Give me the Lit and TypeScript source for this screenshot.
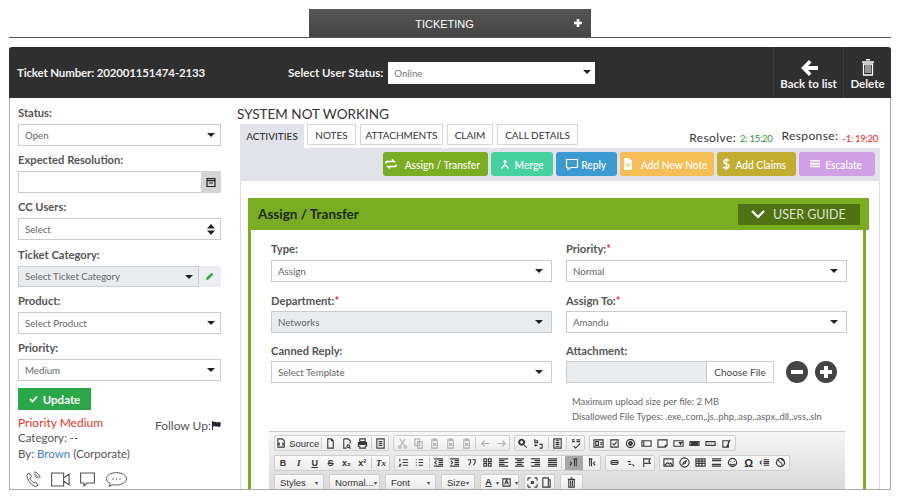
import { LitElement, html, css, svg } from 'lit';
import { customElement } from 'lit/decorators.js';

// 12x12 outline glyphs for the rich text toolbar
const GLYPHS: Record<string, string> = {
  source: 'M2 1h5l2 2v7H2zM4 5L3 6.5 4 8M7 5l1 1.5L7 8',
  doc: 'M3 1h4l2 2v8H3zM7 1v2h2',
  preview: 'M3 1h5l2 2v3M3 1v10h3M8 7.5a1.5 1.5 0 1 0 .01 0M9 10l1.5 1.5',
  print: 'M3 1h6v3H3zM1.5 5h9v4H9v2H3V9H1.5zM2 6h8M2 7h8',
  template: 'M2 1h8v10H2zM4 4h4M4 6h4M4 8h4',
  cut: 'M3 1l5 7M9 1L4 8M3 8.5a1.3 1.3 0 1 0 .01 0M9 8.5a1.3 1.3 0 1 0 .01 0',
  copy: 'M2 1h5v7H2zM5 4h5v7H5z',
  paste: 'M3 2h6v9H3zM5 1h2v2H5zM5 6h2v2H5z',
  undo: 'M5 3L2 6l3 3M2 6h8',
  redo: 'M7 3l3 3-3 3M10 6H2',
  search: 'M5 1.5a3.2 3.2 0 1 0 .01 0M7.5 7.5l3 3M5 2.5a2.2 2.2 0 1 0 .01 0',
  replace: 'M2 1v4h3V3H2M7 7h3v4H7M5 8H2M3 7L2 8l1 1',
  selectall: 'M2 1h8v10H2zM4 3h4M4 5h4M4 7h4M4 9h4',
  spell: 'M1 2h3M1 4h3M6 2h4M6 4h4M3 9l2 2 5-5',
  form: 'M1 2h10v8H1zM3 4h3v4H3zM8 5h2M8 7h2',
  checkbox: 'M2 2h8v8H2zM4 6l1.5 1.5L8.5 4',
  radio: 'M6 1.5a4.5 4.5 0 1 0 .01 0M6 4a2 2 0 1 0 .01 0M6 5a1 1 0 1 0 .01 0',
  field: 'M1 3h10v6H1zM3 3v6',
  area: 'M1 2h10v6l-2 2H1zM9 10V8h2',
  selectbox: 'M1 3h10v6H1zM7 5h2.5L8.2 7z',
  button: 'M1 4h10v4H1zM2 5h8M2 6h8M2 7h8',
  hidden: 'M1 4h10v4H1zM4 6h.5M7 6h.5',
  hiddenfield: 'M2 3h6v7H2zM6 10l4-8',
  ol: 'M2 2v3M1.5 8h1.5L1.5 10H3M5 3h6M5 6h6M5 9h6',
  ul: 'M2 3h1M2 6h1M2 9h1M5 3h5M5 6h5M5 9h5',
  outdent: 'M1 2h10M1 10h10M6 4h5M6 6h5M6 8h5M4 4L2 6l2 2',
  indent: 'M1 2h10M1 10h10M6 4h5M6 6h5M6 8h5M2 4l2 2-2 2',
  quote: 'M2 3h3v3L3 9M7 3h3v3L8 9',
  div: 'M2 2h3v3H2zM7 2h3v3H7zM2 7h3v3H2zM7 7h3v3H7z',
  left: 'M1 2h10M1 4h6M1 6h10M1 8h6M1 10h10',
  center: 'M1 2h10M3 4h6M1 6h10M3 8h6M1 10h10',
  right: 'M1 2h10M5 4h6M1 6h10M5 8h6M1 10h10',
  justify: 'M1 2h10M1 4h10M1 6h10M1 8h10M1 10h10',
  ltr: 'M6 2h4M7 2v8M9 2v8M2 5l2 2-2 2',
  rtl: 'M3 2h4M4 2v8M6 2v8M10 5L8 7l2 2',
  link: 'M4 4h4a2 2 0 0 1 0 4H4a2 2 0 0 1 0-4zM3 6h6',
  unlink: 'M3 5h3M8 8l2 2M4 8h3',
  flag: 'M3 1v10M3 2h7L8.5 4.5 10 7H3',
  image: 'M1 2h10v8H1zM2 9l3-3 2 2 1.5-1.5L10 9',
  flash: 'M6 1a5 5 0 1 0 .01 0M8 4L5 6l-1 2 3-1z',
  table: 'M1 2h10v8H1zM1 4.5h10M1 7h10M4.3 2v8M7.6 2v8',
  rule: 'M1 2h10M1 4h10M1 8h10M1 10h10',
  smile: 'M6 1.5a4.5 4.5 0 1 0 .01 0M4 4.5v1M8 4.5v1M3.5 7.5c1 1.5 4 1.5 5 0',
  pagebreak: 'M1 6l2-2M1 6l2 2M5 3h6M5 5h6M5 7h6M5 9h6',
  iframe: 'M6 1.5a4.5 4.5 0 1 0 .01 0M3 3c2 1 1 3 3 3s1 3 2 3M7 2c0 2 2 1 3 3',
  fit: 'M1 1h3M1 1v3M11 1H8M11 1v3M1 11h3M1 11V8M11 11H8M11 11V8M5 5h2v2H5z',
  blocks: 'M2 1h6v10H2zM8 3h2v8H8',
  trash: 'M3 3h6v8H3zM2 2.5h8M5 1h2M5 4v6M7 4v6',
  bg: 'M2 2h8v8H2zM4 8l2-5 2 5M5 6.5h2',
};

type Item = { i?: string; t?: string; cls?: string } | '|';
type Group = { w: number; dim?: boolean; items: Item[] };

const g = (names: string) =>
  names.split(' ').map((n): Item => (n === '|' ? '|' : { i: n }));

const ROW1: Group[] = [
  { w: 115, items: [{ i: 'source', t: 'Source', cls: 'wide' }, '|', ...g('doc preview print | template')] },
  { w: 117, dim: true, items: g('cut copy paste paste paste | undo redo') },
  { w: 71, items: g('search replace | selectall | spell') },
  { w: 147, items: g('form checkbox radio field area selectbox button hidden hiddenfield') },
];

const ROW2: Group[] = [
  {
    w: 116,
    items: [
      { t: 'B', cls: 'b' }, { t: 'I', cls: 'it' }, { t: 'U', cls: 'u' }, { t: 'S', cls: 's' },
      { t: 'x₂', cls: 'b' }, { t: 'x²', cls: 'b' }, '|', { t: 'Tx', cls: 'it' },
    ],
  },
  {
    w: 207,
    items: [
      ...g('ol ul | outdent indent quote div left center right justify |'),
      { i: 'ltr', cls: 'on' },
      { i: 'rtl' },
    ],
  },
  { w: 50, items: g('link unlink flag') },
  {
    w: 131,
    items: [...g('image flash table rule smile'), { t: 'Ω', cls: 'omega' }, ...g('pagebreak iframe')],
  },
];

const COMBOS = [
  { t: 'Styles', w: 50 },
  { t: 'Normal...', w: 51 },
  { t: 'Font', w: 51 },
  { t: 'Size', w: 34 },
];

const icon = (name: string) => html`<svg class="ck-ic" viewBox="0 0 12 12">${svg`<path d=${GLYPHS[name]}></path>`}</svg>`;

@customElement('cke-toolbar')
export class CkeToolbar extends LitElement {
  static styles = css`
    :host {
      display: block;
      width: 576px;
      height: 80px;
      padding: 3px 0 0 5px;
      box-sizing: border-box;
      background: linear-gradient(#f6f6f6, #cfcfcf);
      border-top: 1px solid #c9c9c9;
    }
    .row { display: flex; gap: 4px; height: 16px; margin-bottom: 3.5px; }
    .group {
      display: flex;
      align-items: center;
      justify-content: space-around;
      box-sizing: border-box;
      height: 16px;
      border: 1px solid #cfcfcf;
      border-radius: 2px;
      background: linear-gradient(#fbfbfb, #ececec);
      font: 9.5px "Liberation Sans", sans-serif;
      color: #333;
    }
    .group.combo { padding: 0 5px; justify-content: space-between; }
    .group.color { width: 39px; }
    .group.view { width: 31px; }
    .group.tools { width: 23px; }
    .dim .ck-ic { opacity: .35; }
    .btn {
      display: flex;
      align-items: center;
      justify-content: center;
      width: 14px;
      height: 14px;
      font-size: 9px;
      gap: 2px;
    }
    .btn.wide { width: 44px; font-size: 9.5px; }
    .btn.on { background: #a8a8a8; width: 18px; }
    .btn.b { font-weight: bold; }
    .btn.it { font-style: italic; font-weight: bold; font-family: "Liberation Serif", serif; }
    .btn.u { font-weight: bold; text-decoration: underline; }
    .btn.s { font-weight: bold; text-decoration: line-through; }
    .btn.omega { font-size: 11px; font-weight: bold; }
    .sep { width: 1px; height: 12px; background: #ccc; }
    .ck-ic { width: 11px; height: 11px; flex: none; }
    .ck-ic path { fill: none; stroke: #3a3a3a; stroke-width: 1.2; }
    .arrow { font-size: 6px; color: #444; }
    .row3 { gap: 5px; }
  `;

  private renderGroup(group: Group) {
    return html`<div class="group ${group.dim ? 'dim' : ''}" style="width:${group.w}px">
      ${group.items.map((it) =>
        it === '|'
          ? html`<span class="sep"></span>`
          : html`<span class="btn ${it.cls ?? ''}">${it.i ? icon(it.i) : ''}${it.t ?? ''}</span>`
      )}
    </div>`;
  }

  render() {
    return html`
      <div class="row">${ROW1.map((r) => this.renderGroup(r))}</div>
      <div class="row">${ROW2.map((r) => this.renderGroup(r))}</div>
      <div class="row row3">
        ${COMBOS.map(
          (c) => html`<div class="group combo" style="width:${c.w}px"><span>${c.t}</span><span class="arrow">▾</span></div>`
        )}
        <div class="group color">
          <span class="btn u">A</span><span class="arrow">▾</span><span class="btn">${icon('bg')}</span><span class="arrow">▾</span>
        </div>
        <div class="group view">
          <span class="btn">${icon('fit')}</span><span class="btn">${icon('blocks')}</span>
        </div>
        <div class="group tools"><span class="btn">${icon('trash')}</span></div>
      </div>
    `;
  }
}

const TABS = [
  { label: 'ACTIVITIES', w: 64, active: true },
  { label: 'NOTES', w: 49 },
  { label: 'ATTACHMENTS', w: 83 },
  { label: 'CLAIM', w: 46 },
  { label: 'CALL DETAILS', w: 81 },
];

const ACTIONS = [
  {
    label: 'Assign / Transfer',
    cls: 'assign',
    icon: svg`<path d="M2 4.500h8l-2-2M12 9.500H4l2 2M2 4.500v2M12 9.500v-2" fill="none" stroke="#fff" stroke-width="1.600"/>`,
  },
  {
    label: 'Merge',
    cls: 'merge',
    icon: svg`<path d="M7 3.500v4M3.500 11.500L7 7.500l3.500 4M5.500 5L7 3.500 8.500 5" fill="none" stroke="#fff" stroke-width="1.300"/>`,
  },
  {
    label: 'Reply',
    cls: 'reply',
    icon: svg`<path d="M1.500 2.500h11v8H6l-3 2v-2H1.500z" fill="none" stroke="#fff" stroke-width="1.200"/>`,
  },
  {
    label: 'Add New Note',
    cls: 'note',
    icon: svg`<path d="M3 1h5l3 3v9H3z" fill="#fff"/><path d="M5 7h4M5 9h4" stroke="#f5bf56"/>`,
  },
  { label: 'Add Claims', cls: 'claims', text: '$' },
  {
    label: 'Escalate',
    cls: 'escalate',
    icon: svg`<path d="M2 3h10v1.600H2zM2 5.800h10v1.600H2zM2 8.600h10v1.600H2z" fill="#fff"/>`,
  },
];

const caret = html`<span class="caret"></span>`;

@customElement('app-root')
export class AppRoot extends LitElement {
  static styles = css`
    :host {
      display: block;
      width: 900px;
      height: 500px;
      overflow: hidden;
      background: #fff;
      font-family: Lato, "Open Sans", sans-serif;
      color: #555;
    }
    .page {
      display: flex;
      flex-direction: column;
      box-sizing: border-box;
      height: 500px;
      padding: 9px 9px 10px;
    }
    .nav {
      display: flex;
      justify-content: center;
      height: 29px;
      flex: none;
      box-sizing: border-box;
      border-bottom: 1px solid #555;
    }
    .nav-tab {
      display: flex;
      align-items: center;
      justify-content: center;
      position: relative;
      box-sizing: border-box;
      width: 282px;
      padding: 2px 11px 0 0;
      background: linear-gradient(#555, #454545);
      color: #fff;
      font: 11px "Liberation Sans", sans-serif;
    }
    .nav-plus {
      position: absolute;
      right: 8px;
      top: 9px;
      width: 10px;
      height: 10px;
    }
    .head {
      display: flex;
      align-items: stretch;
      flex: none;
      height: 51px;
      margin-top: 9px;
      background: #2f2f2f;
      border-radius: 3px 3px 0 0;
      color: #f0f0f0;
      font-size: 11.5px;
      font-weight: 700;
    }
    .ticket-no {
      display: flex;
      align-items: center;
      width: 271px;
      padding-left: 8px;
      box-sizing: border-box;
      letter-spacing: -.15px;
    }
    .user-status { display: flex; align-items: center; gap: 5px; flex: 1; padding-left: 8px; }
    .user-status .sel {
      width: 207px;
      height: 22px;
      border: 0;
      color: #777;
    }
    .user-status .caret { right: 4px; }
    .head-btn {
      display: flex;
      flex-direction: column;
      align-items: center;
      justify-content: flex-end;
      padding-bottom: 7px;
      box-sizing: border-box;
      border-left: 1px solid #3d3d3d;
      font-size: 11.5px;
      line-height: 14px;
    }
    .head-btn svg { display: block; margin-bottom: 1px; }
    .back { width: 70px; }
    .del { width: 48px; }

    .main {
      display: flex;
      flex: 1;
      min-height: 0;
      overflow: hidden;
      border: 1px solid #aaa;
      border-top: 0;
    }
    .side {
      flex: none;
      width: 203px;
      margin-left: 8px;
      padding-top: 8px;
    }
    label {
      display: block;
      height: 14px;
      line-height: 14px;
      font-size: 11.2px;
      font-weight: 700;
      color: #555;
    }
    label i { font-style: normal; color: #e33; }
    .field { margin-bottom: 7.2px; }
    .side label { margin-bottom: 4px; }
    .sel {
      display: flex;
      align-items: center;
      position: relative;
      box-sizing: border-box;
      height: 22px;
      padding-left: 6px;
      border: 1px solid #ccc;
      background: #fff;
      font-size: 9.7px;
      font-weight: 400;
      color: #666;
    }
    .sel.off { background: #e9ecef; }
    .caret {
      position: absolute;
      right: 5px;
      top: 8px;
      width: 0;
      height: 0;
      border-left: 4px solid transparent;
      border-right: 4px solid transparent;
      border-top: 4px solid #222;
    }
    .updown {
      position: absolute;
      right: 5px;
      top: 5px;
      width: 8px;
      height: 11px;
    }
    .addon {
      position: absolute;
      right: -1px;
      top: -1px;
      bottom: -1px;
      width: 20px;
      display: flex;
      align-items: center;
      justify-content: center;
      background: #d4d4d4;
    }
    .cat { display: flex; }
    .cat .sel { flex: 1; height: 21px; }
    .cat .caret { right: 5px; }
    .cat-edit {
      display: flex;
      align-items: center;
      justify-content: center;
      width: 22px;
      background: #eceef1;
    }
    .update {
      display: flex;
      align-items: center;
      justify-content: center;
      gap: 5px;
      width: 73px;
      height: 22px;
      margin-bottom: 6px;
      background: #2aa748;
      color: #fff;
      font-size: 11.5px;
      font-weight: 700;
    }
    .meta { position: relative; font-size: 11.5px; line-height: 15px; }
    .prio { font-size: 12px; color: #e0391c; line-height: 14px; }
    .by { margin-top: 1px; }
    .by a { color: #3f7fbf; }
    .follow {
      position: absolute;
      right: 0;
      top: 2px;
      display: flex;
      align-items: center;
      gap: 1px;
      font-size: 12px;
    }
    .contact { display: flex; align-items: center; gap: 10px; margin: 10px 0 0 7px; }
    .contact svg:last-child { margin-left: 1px; }

    .content { flex: none; width: 643px; margin-left: 16px; }
    h1 {
      margin: 7px 0 0;
      height: 19px;
      line-height: 18px;
      font-size: 13.5px;
      font-weight: 400;
      color: #333;
    }
    .tabs {
      display: flex;
      gap: 4px;
      position: relative;
      height: 24px;
      margin-left: 3px;
    }
    .tab {
      display: flex;
      align-items: center;
      justify-content: center;
      box-sizing: border-box;
      height: 21px;
      border: 1px solid #d5d5d5;
      font-size: 10px;
      color: #333;
    }
    .tab.active { height: 24px; border: 0; background: #e1e3e8; font-weight: 500; margin-right: -1px; }
    .timers {
      position: absolute;
      right: 2px;
      top: 5px;
      display: flex;
      align-items: flex-start;
      gap: 9px;
      font-size: 12px;
      line-height: 14px;
      letter-spacing: .4px;
      color: #333;
    }
    .timers .resolve { margin-top: 2px; }
    .clock { font-size: 9.5px; letter-spacing: -.3px; margin-left: 4px; }
    .timers .ok { color: #2a9a3a; }
    .timers .late { color: #e22; vertical-align: -2px; }
    .panel { margin-left: 3px; width: 640px; border: 1px solid #ddd; border-width: 0 1px; box-sizing: border-box; }
    .actions {
      display: flex;
      justify-content: flex-end;
      gap: 3px;
      box-sizing: border-box;
      height: 33px;
      margin: 0 -1px;
      padding: 4px 5px 0 0;
      background: #e1e3e8;
    }
    .act {
      display: flex;
      align-items: center;
      justify-content: center;
      gap: 0;
      height: 24px;
      border-radius: 3px;
      color: #fff;
      font-size: 12px;
      font-weight: 500;
      white-space: nowrap;
    }
    .act b { font-weight: 700; font-size: 13px; margin-right: 1px; }
    .act span { display: inline-block; transform: scaleX(.85); }
    .assign { width: 105px; background: #7aad22; }
    .merge { width: 62px; background: #48d1a0; }
    .reply { width: 61px; background: #3d9ad1; }
    .note { width: 94px; background: #f5bf56; }
    .claims { width: 79px; background: #c2ad31; }
    .escalate { width: 76px; background: #d09fe6; }

    .card { margin: 17px 0 0 7px; width: 621px; }
    .card-head {
      display: flex;
      align-items: center;
      justify-content: space-between;
      height: 32px;
      padding: 0 9px 0 10px;
      box-sizing: border-box;
      background: #7aad22;
      color: #1d2a08;
      font-size: 13.5px;
      font-weight: 700;
    }
    .guide {
      display: flex;
      align-items: center;
      gap: 8px;
      box-sizing: border-box;
      width: 122px;
      height: 21px;
      padding-left: 13px;
      background: #4f7213;
      color: #dde5cc;
      font-size: 12.5px;
      font-weight: 400;
    }
    .card-body {
      width: 618px;
      box-sizing: border-box;
      padding: 12px 0 0 18px;
      border: 3px solid #7aad22;
      border-width: 0 3px;
    }
    .grid {
      display: grid;
      grid-template-columns: 281px 281px;
      column-gap: 14px;
      row-gap: 11.5px;
      margin-left: 2px;
    }
    .grid label { margin-bottom: 4px; }
    .grid > div:nth-child(n+3) label { margin-bottom: 3px; }
    .grid .caret { right: 8px; }
    .file { display: flex; align-items: center; }
    .file-name { width: 141px; height: 22px; background: #e9ecef; border: 1px solid #ccc; box-sizing: border-box; }
    .file-btn {
      display: flex;
      align-items: center;
      justify-content: center;
      box-sizing: border-box;
      width: 67px;
      height: 22px;
      border: 1px solid #ccc;
      border-left: 0;
      font-size: 10px;
      color: #444;
    }
    .circles { display: flex; gap: 7px; margin-left: 12px; }
    .circles svg { display: block; }
    .hints {
      margin: 11px 0 0 6px;
      font-size: 9.4px;
      line-height: 15px;
      color: #666;
      white-space: nowrap;
    }
    cke-toolbar { margin-top: 7px; }
  `;

  render() {
    return html`
      <div class="page">
        <div class="nav">
          <div class="nav-tab">
            TICKETING
            <svg class="nav-plus" viewBox="0 0 10 10"><path d="M5 1v8M1 5h8" stroke="#fff" stroke-width="2.600"></path></svg>
          </div>
        </div>

        <div class="head">
          <div class="ticket-no">Ticket Number: 202001151474-2133</div>
          <div class="user-status">
            Select User Status:
            <div class="sel">Online${caret}</div>
          </div>
          <div class="head-btn back">
            <svg width="18" height="16" viewBox="0 0 18 16"><path d="M9 0l2.500 2.500L8 6h10v4H8l3.500 3.500L9 16 1 8z" fill="#fff"></path></svg>
            Back to list
          </div>
          <div class="head-btn del">
            <svg width="14" height="17" viewBox="0 0 14 17">
              <path d="M5 .8h4M1 3h12" stroke="#fff" stroke-width="1.500"></path>
              <path d="M2.500 5h9v11h-9z" fill="none" stroke="#fff" stroke-width="1.300"></path>
              <path d="M5 6v8M7 6v8M9 6v8" stroke="#fff" stroke-width="1"></path>
            </svg>
            Delete
          </div>
        </div>

        <div class="main">
          <aside class="side">
            <div class="field"><label>Status:</label><div class="sel">Open${caret}</div></div>
            <div class="field">
              <label>Expected Resolution:</label>
              <div class="sel">
                <span class="addon">
                  <svg width="10" height="10" viewBox="0 0 10 10"><path d="M1 1.500h8v8H1z" fill="none" stroke="#222" stroke-width="1.200"></path><path d="M1 3.500h8" stroke="#222" stroke-width="1.500"></path><path d="M3 6h4" stroke="#777" stroke-width="2"></path></svg>
                </span>
              </div>
            </div>
            <div class="field">
              <label>CC Users:</label>
              <div class="sel">
                Select
                <svg class="updown" viewBox="0 0 8 11"><path d="M4 0l4 4.500H0zM4 11l4-4.500H0z" fill="#222"></path></svg>
              </div>
            </div>
            <div class="field">
              <label>Ticket Category:</label>
              <div class="cat">
                <div class="sel off">Select Ticket Category${caret}</div>
                <div class="cat-edit">
                  <svg width="8" height="8" viewBox="0 0 8 8"><path d="M0 8l.6-2.400L5.500.7l1.800 1.800-4.900 4.900z" fill="#2aa748"></path></svg>
                </div>
              </div>
            </div>
            <div class="field"><label>Product:</label><div class="sel">Select Product${caret}</div></div>
            <div class="field"><label>Priority:</label><div class="sel">Medium${caret}</div></div>
            <div class="update">
              <svg width="9" height="8" viewBox="0 0 9 8"><path d="M1 4l2.500 2.500L8 1.500" fill="none" stroke="#fff" stroke-width="1.800"></path></svg>
              Update
            </div>
            <div class="meta">
              <div class="prio">Priority Medium</div>
              <div>Category: --</div>
              <div class="by">By: <a>Brown</a> (Corporate)</div>
              <div class="follow">
                Follow Up:
                <svg width="9" height="9" viewBox="0 0 9 9"><path d="M.5 0v9" stroke="#222"></path><path d="M1 1c2-1 3 1 5 .3L8.500 1v4.500C6 6.500 4 4.500 1 5.500z" fill="#223"></path></svg>
              </div>
            </div>
            <div class="contact">
              <svg width="16" height="17" viewBox="0 0 16 17" fill="none" stroke="#555" stroke-width="1">
                <path d="M2 3.500L4 2l2.500 3.500-1.500 1.500c.5 2 2 3.500 4 5l1.500-1 2.500 3-2 1.500C7 15 1.500 9 2 3.500z"></path>
                <path d="M9 3c2 0 4 2 4 4M9.500 5c1 0 2 1 2 2M9 1c3 0 6 3 6 6"></path>
              </svg>
              <svg width="19" height="15" viewBox="0 0 19 15" fill="none" stroke="#555" stroke-width="1.100"><path d="M.6 1h12v13H.6zM12.600 6l5.500-4v11l-5.500-4"></path></svg>
              <svg width="15" height="15" viewBox="0 0 15 15" fill="none" stroke="#555" stroke-width="1.100"><path d="M.6 1h13.800v10H7l-3 3v-3H.6z"></path></svg>
              <svg width="21" height="15" viewBox="0 0 21 15" fill="none" stroke="#555" stroke-width="1">
                <path d="M10.500 .6c5.500 0 10 2.800 10 6.200s-4.500 6.200-10 6.200c-1.200 0-2.400-.1-3.400-.4L3 14.400l1.200-3C2 10.200.5 8.600.5 6.800.5 3.400 5 .6 10.500 .6z"></path>
                <path d="M6.500 7h1M10 7h1M13.500 7h1" stroke-width="1.400"></path>
              </svg>
            </div>
          </aside>

          <section class="content">
            <h1>SYSTEM NOT WORKING</h1>
            <div class="tabs">
              ${TABS.map((t) => html`<div class="tab ${t.active ? 'active' : ''}" style="width:${t.w}px">${t.label}</div>`)}
              <div class="timers">
                <span class="resolve">Resolve:<span class="clock ok">2: 15:20</span></span>
                <span>Response:<span class="clock late">-1: 19:20</span></span>
              </div>
            </div>
            <div class="panel">
              <div class="actions">
                ${ACTIONS.map(
                  (a) => html`<div class="act ${a.cls}">
                    ${a.text ? html`<b>${a.text}</b>` : html`<svg width="14" height="14" viewBox="0 0 14 14">${a.icon}</svg>`}
                    <span>${a.label}</span>
                  </div>`
                )}
              </div>
              <div class="card">
                <div class="card-head">
                  Assign / Transfer
                  <div class="guide">
                    <svg width="14" height="9" viewBox="0 0 14 9"><path d="M1 1l6 6 6-6" fill="none" stroke="#fff" stroke-width="2.200"></path></svg>
                    USER GUIDE
                  </div>
                </div>
                <div class="card-body">
                  <div class="grid">
                    <div><label>Type:</label><div class="sel">Assign${caret}</div></div>
                    <div><label>Priority:<i>*</i></label><div class="sel">Normal${caret}</div></div>
                    <div><label>Department:<i>*</i></label><div class="sel off">Networks${caret}</div></div>
                    <div><label>Assign To:<i>*</i></label><div class="sel">Amandu${caret}</div></div>
                    <div><label>Canned Reply:</label><div class="sel">Select Template${caret}</div></div>
                    <div>
                      <label>Attachment:</label>
                      <div class="file">
                        <div class="file-name"></div>
                        <div class="file-btn">Choose File</div>
                        <div class="circles">
                          <svg width="22" height="22" viewBox="0 0 22 22"><circle cx="11" cy="11" r="11" fill="#444"></circle><path d="M5 11h12" stroke="#fff" stroke-width="4"></path></svg>
                          <svg width="22" height="22" viewBox="0 0 22 22"><circle cx="11" cy="11" r="11" fill="#444"></circle><path d="M5 11h12M11 5v12" stroke="#fff" stroke-width="4"></path></svg>
                        </div>
                      </div>
                      <div class="hints">
                        Maximum upload size per file: 2 MB<br />
                        Disallowed File Types: .exe,.com,.js,.php,.asp,.aspx,.dll,.vss,.sln
                      </div>
                    </div>
                  </div>
                  <cke-toolbar></cke-toolbar>
                </div>
              </div>
            </div>
          </section>
        </div>
      </div>
    `;
  }
}
